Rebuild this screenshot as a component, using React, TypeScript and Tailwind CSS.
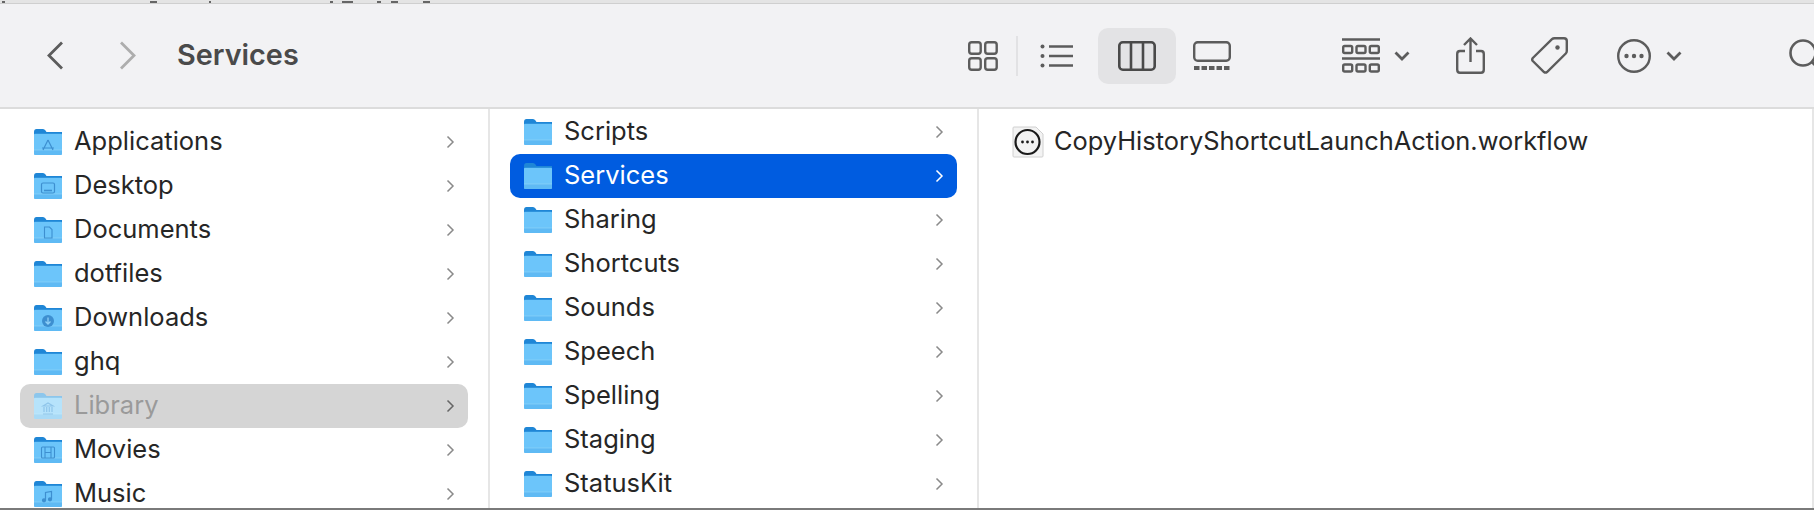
import { ReactNode } from "react"

const leftColumn = [
    { name: "Applications", badge: "apps" },
    { name: "Desktop", badge: "desktop" },
    { name: "Documents", badge: "doc" },
    { name: "dotfiles" },
    { name: "Downloads", badge: "download" },
    { name: "ghq" },
    { name: "Library", badge: "library", muted: true },
    { name: "Movies", badge: "movie" },
    { name: "Music", badge: "music" },
]

const midColumn = [
    { name: "Scripts" },
    { name: "Services", active: true },
    { name: "Sharing" },
    { name: "Shortcuts" },
    { name: "Sounds" },
    { name: "Speech" },
    { name: "Spelling" },
    { name: "Staging" },
    { name: "StatusKit" },
]

// bits of the menu bar text still visible above the window
const menuBits = [
    [2, 3],
    [150, 7],
    [209, 2],
    [330, 3],
    [342, 11],
    [377, 4],
    [391, 7],
    [423, 7],
]

const Badge = ({ type, c }: { type?: string; c: string }) => {
    if (type === "apps")
        return <path d="M14 12 L9 22 M14 12 L19 22 M8 20 H20" stroke={c} strokeWidth="1.2" fill="none" />
    if (type === "desktop")
        return (
            <g stroke={c} strokeWidth="1.2" fill="none">
                <rect x="7.5" y="11" width="13" height="10" rx="1.5" />
                <path d="M10 18.5 H18" strokeWidth="1.6" />
            </g>
        )
    if (type === "doc") return <path d="M10.5 11 H15.5 L18 13.5 V22 H10.5 Z" stroke={c} strokeWidth="1.1" fill="none" />
    if (type === "download")
        return (
            <g>
                <circle cx="14" cy="17" r="6" fill={c} />
                <path d="M14 13.5 V19.5 M11.5 17.5 L14 20 L16.5 17.5" stroke="#8fd0f8" strokeWidth="1.3" fill="none" />
            </g>
        )
    if (type === "library")
        return <path d="M9 22 H19 M10 20 V15 M12.7 20 V15 M15.3 20 V15 M18 20 V15 M9 14 L14 11 L19 14 Z" stroke={c} strokeWidth="1.2" fill="none" />
    if (type === "movie")
        return (
            <g stroke={c} strokeWidth="1.1" fill="none">
                <rect x="7.5" y="11" width="13" height="11" rx="1" />
                <path d="M11 11 V22 M17 11 V22 M11 16.5 H17" />
            </g>
        )
    if (type === "music")
        return (
            <g stroke={c} strokeWidth="1.2" fill="none">
                <path d="M11.5 20 V12.5 L17.5 11.5 V19" />
                <circle cx="10" cy="20.3" r="1.5" fill={c} />
                <circle cx="16" cy="19.3" r="1.5" fill={c} />
            </g>
        )
    return null
}

const FolderIcon = ({ badge, muted }: { badge?: string; muted?: boolean }) => {
    const tab = muted ? "#8cc6ec" : "#1f86d6"
    const body = muted ? "#b6e3fb" : "#6cc5fa"
    const band = muted ? "#a9daf6" : "#5fbaf4"
    const line = muted ? "#c8ebfc" : "#96d6fa"
    return (
        <svg width="28" height="28" viewBox="0 0 28 28" className="shrink-0">
            <path d="M0 4 Q0 1 2.5 1 H9 Q10.5 1 11.5 2.5 L12.5 4 H28 V10 H0 Z" fill={tab} />
            <path d="M0 6.5 Q0 5 1.5 5 H26.5 Q28 5 28 6.5 V25.5 Q28 27 26.5 27 H1.5 Q0 27 0 25.5 Z" fill={body} />
            <path d="M0 5 H28 V5.8 H0 Z" fill={tab} />
            <path d="M0 22 H28 V25.5 Q28 27 26.5 27 H1.5 Q0 27 0 25.5 Z" fill={band} />
            <path d="M0 22 H28" stroke={line} strokeWidth="0.6" />
            <Badge type={badge} c={muted ? "#8fc5ea" : "#3d8fd0"} />
        </svg>
    )
}

const Chevron = ({ color = "#8a8a8a" }: { color?: string }) => (
    <svg width="9" height="14" viewBox="0 0 9 14" className="shrink-0">
        <path d="M1.5 1.5 L7 7 L1.5 12.5" stroke={color} strokeWidth="1.5" fill="none" />
    </svg>
)

const Row = ({ name, badge, muted, active }: { name: string; badge?: string; muted?: boolean; active?: boolean }) => (
    <div
        className={`mx-5 flex h-[44px] shrink-0 items-center rounded-[10px] pl-[14px] pr-[13px] ${
            active ? "bg-[#005ce0]" : muted ? "bg-[#d5d5d5]" : ""
        }`}
    >
        <FolderIcon badge={badge} muted={muted} />
        <span
            className={`ml-[12px] flex-1 pb-[2px] text-[25.5px] leading-none ${
                active ? "text-white" : muted ? "text-[#9a9a9a]" : "text-[#262626]"
            }`}
        >
            {name}
        </span>
        <Chevron color={active ? "#ffffff" : muted ? "#666666" : "#8a8a8a"} />
    </div>
)

const Tool = ({ w, h, ml, children }: { w: number; h: number; ml: number; children: ReactNode }) => (
    <svg
        width={w}
        height={h}
        viewBox={`0 0 ${w} ${h}`}
        style={{ marginLeft: ml }}
        className="shrink-0"
        fill="none"
        stroke="#5c5c5c"
        strokeWidth="2.4"
    >
        {children}
    </svg>
)

const SmallDown = ({ ml }: { ml: number }) => (
    <Tool w={16} h={10} ml={ml}>
        <path d="M1.5 1.5 L8 8 L14.5 1.5" strokeWidth="2.8" />
    </Tool>
)

const Toolbar = () => (
    <div className="flex h-[105px] shrink-0 items-center border-b-2 border-[#dcdcdc] bg-[#f2f2f4]">
        <Tool w={16} h={29} ml={47}>
            <path d="M15 1.5 L2 14.5 L15 27.5" strokeWidth="2.8" />
        </Tool>
        <Tool w={16} h={29} ml={57}>
            <path d="M1 1.5 L14 14.5 L1 27.5" strokeWidth="2.8" stroke="#adadad" />
        </Tool>
        <span className="ml-[41px] w-[122px] shrink-0 text-[28.8px] font-semibold leading-none text-[#4a4a4a]">
            Services
        </span>
        <div className="flex shrink-0 items-center">
            <Tool w={30} h={30} ml={669}>
                <rect x="1.2" y="1.2" width="11.5" height="11.5" rx="2.5" />
                <rect x="17.2" y="1.2" width="11.5" height="11.5" rx="2.5" />
                <rect x="1.2" y="17.2" width="11.5" height="11.5" rx="2.5" />
                <rect x="17.2" y="17.2" width="11.5" height="11.5" rx="2.5" />
            </Tool>
            <div className="ml-[18px] h-10 w-[2px] bg-[#e2e2e4]" />
            <Tool w={33} h={24} ml={22}>
                <circle cx="2.5" cy="2.5" r="2" fill="#5c5c5c" stroke="none" />
                <circle cx="2.5" cy="12" r="2" fill="#5c5c5c" stroke="none" />
                <circle cx="2.5" cy="21.5" r="2" fill="#5c5c5c" stroke="none" />
                <path d="M9 2.5 H33 M9 12 H33 M9 21.5 H33" />
            </Tool>
            <div className="ml-[25px] flex h-[56px] w-[78px] items-center justify-center rounded-[10px] bg-[#e3e3e5]">
                <Tool w={38} h={30} ml={0}>
                    <rect x="1.3" y="1.3" width="35.4" height="27.4" rx="3.5" stroke="#4a4a4a" strokeWidth="2.6" />
                    <path d="M13 1.3 V28.7 M25 1.3 V28.7" stroke="#4a4a4a" strokeWidth="2.6" />
                </Tool>
            </div>
            <Tool w={38} h={29} ml={17}>
                <rect x="1.2" y="1.2" width="35.6" height="18.6" rx="3.5" />
                <path d="M1 27 H37" strokeWidth="4" strokeDasharray="5.5 2" />
            </Tool>
            <Tool w={38} h={35} ml={111}>
                <path d="M0 1.5 H38 M0 20.5 H38" />
                <rect x="1.2" y="8" width="9" height="7" rx="1.5" />
                <rect x="14.5" y="8" width="9" height="7" rx="1.5" />
                <rect x="27.8" y="8" width="9" height="7" rx="1.5" />
                <rect x="1.2" y="26.5" width="9" height="7" rx="1.5" />
                <rect x="14.5" y="26.5" width="9" height="7" rx="1.5" />
                <rect x="27.8" y="26.5" width="9" height="7" rx="1.5" />
            </Tool>
            <SmallDown ml={14} />
            <Tool w={29} h={37} ml={46}>
                <path d="M9 14 H4 Q1.2 14 1.2 17 V32.5 Q1.2 35.8 4 35.8 H25 Q27.8 35.8 27.8 32.5 V17 Q27.8 14 25 14 H20" />
                <path d="M14.5 25 V2 M8 8 L14.5 1.5 L21 8" />
            </Tool>
            <Tool w={37} h={37} ml={46}>
                <path d="M1.8 21 L21 2.2 Q22 1.2 23.5 1.2 H33 Q35.8 1.2 35.8 4 V14 Q35.8 15.5 34.8 16.5 L16 35 Q14.5 36.2 13 35 L1.8 24 Q0.6 22.5 1.8 21 Z" />
                <circle cx="26.5" cy="10.5" r="2.2" fill="#5c5c5c" stroke="none" />
            </Tool>
            <Tool w={34} h={34} ml={49}>
                <circle cx="17" cy="17" r="15.8" />
                <circle cx="9.5" cy="17" r="2.2" fill="#5c5c5c" stroke="none" />
                <circle cx="17" cy="17" r="2.2" fill="#5c5c5c" stroke="none" />
                <circle cx="24.5" cy="17" r="2.2" fill="#5c5c5c" stroke="none" />
            </Tool>
            <SmallDown ml={15} />
            <Tool w={34} h={34} ml={107}>
                <circle cx="14" cy="14" r="12.5" strokeWidth="2.6" />
                <path d="M23 23 L33 33" strokeWidth="3" />
            </Tool>
        </div>
    </div>
)

const App = () => {
    return (
        <div className="flex h-[510px] w-[1814px] flex-col overflow-hidden bg-white font-['Inter',sans-serif]">
            <div className="relative h-[4px] shrink-0 border-b border-[#cfcfcf] bg-[#e4e4e4]">
                {menuBits.map(([x, w]) => (
                    <span key={x} className="absolute top-[1px] h-[2px] bg-[#666666]" style={{ left: x, width: w }} />
                ))}
            </div>
            <Toolbar />
            <div className="flex min-h-0 flex-1">
                <div className="flex w-[490px] shrink-0 flex-col overflow-hidden border-r-2 border-[#e6e6e6] pt-[11px]">
                    {leftColumn.map((item) => (
                        <Row key={item.name} {...item} />
                    ))}
                </div>
                <div className="flex w-[489px] shrink-0 flex-col overflow-hidden border-r-2 border-[#e6e6e6] pt-[1px]">
                    {midColumn.map((item) => (
                        <Row key={item.name} {...item} />
                    ))}
                </div>
                <div className="min-w-0 flex-1 border-r-2 border-[#e6e6e6] pt-[11px] pl-[33px]">
                    <div className="flex h-[44px] items-center">
                        <svg width="32" height="32" viewBox="0 0 32 32" className="shrink-0">
                            <path d="M1 2 Q1 1 2 1 H24 L31 8 V30 Q31 31 30 31 H2 Q1 31 1 30 Z" fill="#f3f3f3" stroke="#d0d0d0" />
                            <circle cx="15.5" cy="16" r="12" fill="none" stroke="#1a1a1a" strokeWidth="2.2" />
                            <circle cx="10.5" cy="16" r="1.4" fill="#1a1a1a" />
                            <circle cx="15.5" cy="16" r="1.4" fill="#1a1a1a" />
                            <circle cx="20.5" cy="16" r="1.4" fill="#1a1a1a" />
                        </svg>
                        <span className="ml-[10px] pb-[2px] text-[25.4px] leading-none text-[#262626]">
                            CopyHistoryShortcutLaunchAction.workflow
                        </span>
                    </div>
                </div>
            </div>
            <div className="h-[2px] shrink-0 bg-[#7a7a7a]" />
        </div>
    )
}

export default App
